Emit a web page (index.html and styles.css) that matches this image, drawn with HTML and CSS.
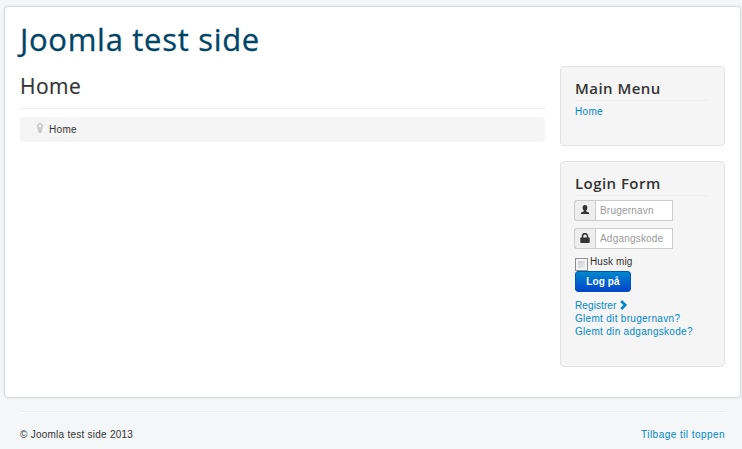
FILE: index.html
```
<!DOCTYPE html>
<html lang="da">
<head>
    <meta charset="UTF-8">
    <meta name="viewport" content="width=device-width, initial-scale=1.0">
    <title>Home</title>
    <link rel="stylesheet" href="styles.css">
</head>
<body>

    <div class="container">
        <header class="header">
            <a class="brand" href="#">Joomla test side</a>
        </header>
        <div class="row">
            <main class="content">
                <div class="page-header">
                    <h2>Home</h2>
                </div>
                <ul class="breadcrumb">
                    <li>
                        <svg width="6" height="10" viewBox="0 0 6 10"><path fill="#ccc" fill-rule="evenodd" d="M3 0a3 3 0 0 1 3 3c0 2.500-1.200 3.500-1.600 7H1.600C1.200 6.500 0 5.500 0 3a3 3 0 0 1 3-3zm0 1.700a1.300 1.300 0 1 0 0 2.600 1.300 1.300 0 0 0 0-2.600z"/></svg>
                        <span>Home</span>
                    </li>
                </ul>
            </main>
            <aside class="sidebar">
                <div class="well menu">
                    <h3>Main Menu</h3>
                    <a href="#">Home</a>
                </div>
                <div class="well login">
                    <h3>Login Form</h3>
                    <form>
                        <div class="input-prepend">
                            <span class="add-on">
                                <svg width="10" height="10" viewBox="0 0 10 10"><path fill="#333" d="M5 0c1.500 0 2.400 1 2.400 2.500C7.400 4 6.800 5 6.300 5.500v1L9 7.500V9H1V7.500l2.700-1v-1C3.200 5 2.600 4 2.600 2.500 2.600 1 3.500 0 5 0z"/></svg>
                            </span>
                            <input type="text" placeholder="Brugernavn">
                        </div>
                        <div class="input-prepend">
                            <span class="add-on">
                                <svg width="10" height="11" viewBox="0 0 10 11"><path fill="none" stroke="#333" stroke-width="1.500" d="M2.500 5.500V3.200a2.500 2.500 0 0 1 5 0v2.300"/><rect x=".3" y="4.500" width="9.400" height="5.500" rx=".7" fill="#333"/></svg>
                            </span>
                            <input type="password" placeholder="Adgangskode">
                        </div>
                        <label class="remember"><input type="checkbox"><span>Husk mig</span></label>
                        <button type="button" class="btn">Log på</button>
                        <ul class="links">
                            <li><a class="register" href="#">Registrer<svg class="arrow" width="8" height="10" viewBox="0 0 8 10"><path fill="none" stroke="#08c" stroke-width="2.700" d="M1.200 1l4 4-4 4"/></svg></a></li>
                            <li><a href="#">Glemt dit brugernavn?</a></li>
                            <li><a href="#">Glemt din adgangskode?</a></li>
                        </ul>
                    </form>
                </div>
            </aside>
        </div>
    </div>

    <footer class="footer">
        <p>&copy; Joomla test side 2013</p>
        <a href="#">Tilbage til toppen</a>
    </footer>

</body>
</html>
```
FILE: styles.css
```
* {
    box-sizing: border-box;
}
body {
    margin: 0;
    padding: 6px 1px 0 4px;
    height: 449px;
    overflow: hidden;
    background-color: #f4f6f7;
    color: #333;
    font-family: "Liberation Sans", Arial, sans-serif;
    font-size: 10px;
    line-height: 13px;
    letter-spacing: 0.3px;
}
a {
    color: #08c;
    text-decoration: none;
}
h2, h3 {
    margin: 0;
    font-family: "Open Sans", sans-serif;
}
ul {
    margin: 0;
    padding: 0;
    list-style: none;
}
.container {
    height: 392px;
    padding: 0 15px;
    background-color: #fff;
    border: 1px solid #d8dadb;
    border-radius: 4px;
    box-shadow: 0 0 3px rgba(0, 0, 0, 0.08);
}
.header {
    height: 59px;
    padding-top: 11px;
}
.brand {
    display: block;
    color: #004466;
    font-family: "Open Sans", sans-serif;
    font-size: 31px;
    line-height: 42px;
    letter-spacing: 0.7px;
    -webkit-text-stroke: 0.3px #004466;
}
.row {
    display: flex;
    gap: 15px;
}
.content {
    flex: 1;
}
.page-header {
    height: 43px;
    border-bottom: 1px solid #eee;
}
.page-header h2 {
    font-size: 21px;
    font-weight: 400;
    line-height: 41px;
    letter-spacing: 0.5px;
    -webkit-text-stroke: 0.2px #333;
}
.breadcrumb {
    margin-top: 8px;
    height: 25px;
    padding: 6px 17px;
    background-color: #f5f5f5;
    border-radius: 4px;
}
.breadcrumb li {
    display: flex;
    gap: 6px;
}
.sidebar {
    width: 165px;
}
.well {
    padding: 13px 16px 0 14px;
    background-color: #f5f5f5;
    border: 1px solid #e3e3e3;
    border-radius: 4px;
}
.menu {
    height: 80px;
    margin-bottom: 15px;
}
.login {
    height: 206px;
}
.well h3 {
    height: 21px;
    margin-bottom: 4px;
    border-bottom: 1px solid #eee;
    font-size: 15px;
    font-weight: 600;
    line-height: 17px;
    letter-spacing: 0.45px;
}
.input-prepend {
    display: flex;
    width: 99px;
    height: 21px;
    margin: 0 0 7px -1px;
}
.add-on {
    display: flex;
    justify-content: center;
    width: 21px;
    padding: 4px 1px 0 0;
    background-color: #eee;
    border: 1px solid #ccc;
    border-right: 0;
    border-radius: 3px 0 0 3px;
}
.input-prepend input {
    width: 78px;
    padding: 0 4px;
    border: 1px solid #ccc;
    font: inherit;
    letter-spacing: 0.2px;
}
.input-prepend input::placeholder {
    color: #999;
}
.remember {
    display: flex;
    gap: 2px;
    height: 15px;
}
.remember input {
    appearance: none;
    width: 13px;
    height: 13px;
    margin: 2px 0 0;
    border: 1px solid #8e8f8f;
    background: linear-gradient(135deg, #bcc1c8, #f6f6f6);
    box-shadow: inset 0 0 0 2px #f4f4f4;
}
.remember span {
    margin-top: -1px;
    letter-spacing: 0.1px;
}
.btn {
    display: block;
    width: 56px;
    height: 21px;
    padding: 0;
    color: #fff;
    background: linear-gradient(#08c, #04c);
    border: 1px solid #0055bb;
    border-radius: 3px;
    font: bold 10px/19px "Liberation Sans", Arial, sans-serif;
    letter-spacing: 0.1px;
}
.links {
    margin-top: 7px;
}
.links a {
    display: flex;
}
.links .register {
    letter-spacing: 0.1px;
}
.arrow {
    margin: 1px 0 0 4px;
}
.footer {
    display: flex;
    justify-content: space-between;
    margin: 13px 16px 0;
    padding-top: 16px;
    border-top: 1px solid #eaecee;
    box-shadow: inset 0 1px 0 #fff;
}
.footer p {
    margin: 0;
    letter-spacing: 0.25px;
}
.footer a {
    letter-spacing: 0.45px;
}
```
